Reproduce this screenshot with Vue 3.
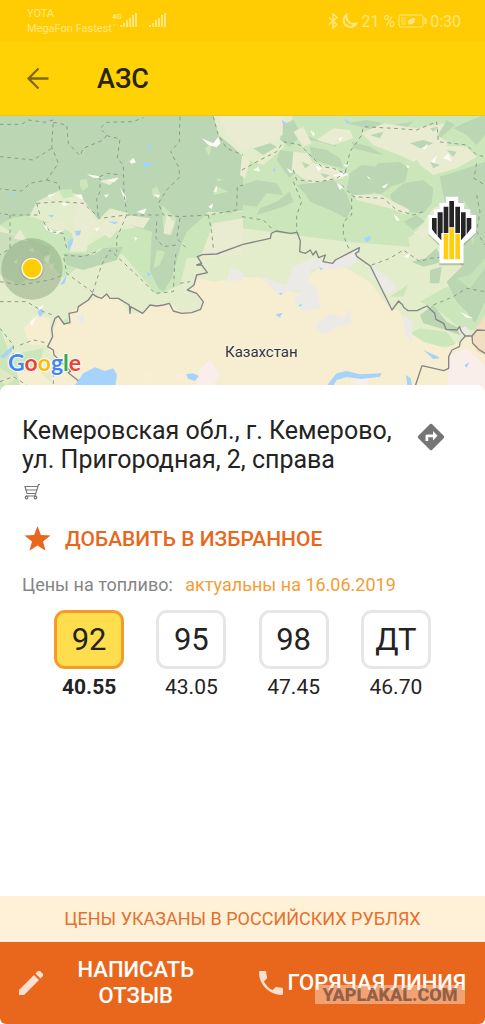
<script setup>
import { ref } from 'vue'

const fuels = [
  { name: '92', price: '40.55' },
  { name: '95', price: '43.05' },
  { name: '98', price: '47.45' },
  { name: 'ДТ', price: '46.70' },
]
const selected = ref('92')

const logo = [
  ['G', 'blue'],
  ['o', 'red'],
  ['o', 'yellow'],
  ['g', 'blue'],
  ['l', 'green'],
  ['e', 'red'],
]
</script>

<template>
  <div class="screen">
    <header class="top">
      <div class="status">
        <div class="carriers">YOTA<br />MegaFon Fastest</div>
        <svg class="signals" width="56" height="20" viewBox="0 0 56 20" fill="currentColor">
          <text x="0" y="8" font-size="8" font-weight="700" font-family="Roboto, sans-serif">4G</text>
          <path d="M8 14h2v2H8zM11 12h2v4h-2zM14 9h2v7h-2zM17 7h2v9h-2zM20 4h2v12h-2zM23 2h2v14h-2z" />
          <path d="M37 14h2v2h-2zM40 12h2v4h-2zM43 9h2v7h-2zM46 7h2v9h-2zM49 4h2v12h-2zM52 2h2v14h-2z" />
          <path d="M1 13h2v2H1zM4 13h2v2H4z" opacity=".4" />
        </svg>
        <div class="system">
          <svg width="12" height="16" viewBox="0 0 12 16" fill="none" stroke="currentColor" stroke-width="1.500">
            <path d="M2 4.500l8 7-4 3.500V1l4 3.500-8 7" />
          </svg>
          <svg width="16" height="16" viewBox="0 0 16 16" fill="none" stroke="currentColor" stroke-width="2">
            <path d="M4.500 1.500C1 4 .5 9 3.500 12c3.200 3.200 8.500 2.500 11-1.500C9 12.500 3.500 8 4.500 1.500Z" />
          </svg>
          <span>21 %</span>
          <svg width="29" height="14" viewBox="0 0 29 14" fill="none" stroke="currentColor">
            <rect x="1" y="1" width="24" height="12" rx="2" />
            <path d="M27.500 4v6" stroke-width="2" />
            <path d="M3 3h5v8H3z" fill="currentColor" stroke="none" opacity=".4" />
            <path d="M10 11c-1-5 2-7 7-7 0 5-2 7-6 6z" fill="currentColor" stroke="none" />
          </svg>
          <span>0:30</span>
        </div>
      </div>
      <div class="appbar">
        <button class="icon-button" aria-label="Назад">
          <svg width="24" height="24" viewBox="0 0 24 24" fill="none" stroke="currentColor" stroke-width="2.300">
            <path d="M22.500 11.500H3M12.500 1.500l-10 10 10 10" />
          </svg>
        </button>
        <h1>АЗС</h1>
      </div>
    </header>

    <section class="map" aria-label="Карта">
      <svg class="terrain" viewBox="0 3 1455 846" preserveAspectRatio="xMidYMin slice">
        <rect y="0" width="1455" height="860" fill="#e4edcb" />

        <!-- light woodland -->
        <g fill="#cbe6bb">
          <path d="M0 300 60 295 140 320 210 350 250 400 330 350 450 330 460 420 600 300 729 290 850 330 1000 360 1180 390 1240 360 1300 280 1455 220V0H880L850 100 790 150 729 130V420L560 430 540 510 470 540 370 420 300 400 230 460 190 490 120 410 0 330Z" />
          <path d="M726 340 1040 380 1230 395 1220 340 1080 230 900 220 726 200Z" />
          <path d="M1170 545 1225 508 1210 545ZM1260 560 1330 520 1400 500 1455 530V650L1380 640 1320 590Z" />
          <path d="M0 640 30 720 130 700 110 800 0 830ZM160 640 200 610 215 630 180 670ZM220 590 290 575 270 605Z" />
          <path d="M1200 670 1260 640 1340 650 1370 690 1290 700Z" />
        </g>

        <!-- dense forest -->
        <g fill="#bad6b3">
          <path d="M0 0H640L655 60 695 92 729 125V285L690 295 625 290 600 315 560 350 545 385 535 420 515 490 490 530 475 520 450 465 455 350 390 330 385 295 330 280 295 315 240 240 180 225 110 260 90 300 30 310 0 330Z" />
          <path d="M846 30 880 15 900 50 950 75 985 60 1010 95 960 80 895 70 870 95 840 75Z" />
          <path d="M840 105 880 110 895 160 870 190 850 165 830 135ZM726 210 770 195 830 205 850 240 800 235 770 275 726 270Z" />
          <path d="M930 95 980 105 1020 130 1030 160 970 145 935 130ZM1055 80 1110 95 1150 120 1120 115 1060 100Z" />
          <path d="M890 210 1000 195 1040 235 1055 280 1040 310 990 285 930 260 915 235Z" />
          <path d="M1050 175 1085 150 1130 155 1145 205 1120 235 1060 245 1040 220Z" />
          <path d="M1105 180 1135 145 1200 140 1225 160 1215 200 1170 215 1140 240 1110 225Z" />
          <path d="M1170 240 1210 205 1270 195 1300 220 1295 265 1270 295 1220 290 1180 270Z" />
          <path d="M1320 185 1400 160 1455 140V500L1400 470 1375 440 1350 330 1330 240Z" />
          <path d="M1360 40 1400 20 1455 0V60L1430 90 1400 60ZM1340 15 1365 30 1320 70 1335 85 1300 90Z" />
          <path d="M1340 500 1400 440 1455 410V560L1425 625 1400 590 1370 560Z" />
          <path d="M1260 600 1300 570 1340 620 1400 650 1380 660 1320 640 1270 625Z" />
          <path d="M1235 440 1275 430 1310 400 1330 440 1270 455ZM1290 465 1325 455 1318 505 1290 505Z" />
          <path d="M1040 25 1100 15 1180 30 1240 20 1220 38 1120 45ZM1180 55 1230 50 1290 65 1250 75ZM1210 320 1250 300 1275 320 1240 345ZM760 100 810 85 830 95 790 120ZM770 300 850 275 880 260 870 230 830 260 780 280Z" />
          <path d="M190 415 280 420 310 400 370 395 350 435 250 465 200 450Z" />
          <path d="M0 350 90 370 150 400 140 440 60 510 0 480Z" opacity=".6" />
        </g>
        <g fill="#cbe6bb">
          <path d="M240 195 260 192 265 215 248 228 240 212ZM455 225 470 213 483 240 460 248ZM175 225 215 222 220 245 190 250ZM615 100 635 85 628 125ZM485 270 530 310 515 360 490 340ZM650 190 668 193 655 200ZM645 212 685 230 640 240Z" />
          <path d="M1370 490 1410 480 1455 430V460L1410 520ZM1390 250 1430 320 1420 390 1390 330Z" opacity=".7" />
          <path d="M470 405 495 410 480 450 460 460Z" />
        </g>

        <!-- open plains -->
        <g fill="#e9ecd0">
          <path d="M655 0H850L848 60 790 90 729 105 680 60ZM880 50 910 35 935 85 910 95ZM880 110 920 115 940 145 1010 160 1030 190 930 205 875 165Z" />
          <path d="M1085 55 1150 25 1250 40 1335 25 1310 60 1350 85 1300 110 1240 140 1210 125 1120 90ZM1240 115 1310 90 1400 95 1430 125 1370 160 1300 180 1260 150Z" />
          <path d="M1060 240 1140 238 1190 265 1230 285 1220 300 1170 280 1070 255ZM950 75 1000 40 1050 45 1060 70 1000 90ZM726 120 750 140 735 190 720 180Z" />
          <path d="M240 240 300 335 340 285 380 300 450 310 430 340 370 325 330 370 290 345 240 380 220 330ZM130 325 195 320 190 350 150 340ZM310 195 355 188 330 210 300 200ZM200 250 250 245 240 270ZM500 300 525 320 510 360 490 355ZM1240 350 1300 335 1270 370Z" />
          <path d="M60 345 85 380 40 370ZM220 350 270 350 260 410 210 410ZM640 325 729 310 729 420 600 430Z" />
        </g>
        <g fill="#bad6b3">
          <path d="M1110 60 1150 50 1140 70ZM1230 85 1270 75 1300 85 1260 100ZM905 140 930 150 915 160ZM960 175 990 180 975 190ZM1290 140 1320 150 1300 160ZM1340 105 1370 110 1360 125ZM1290 40 1315 35 1300 50Z" />
        </g>

        <!-- steppe and desert -->
        <g fill="#f7edd0">
          <path d="M175 603 192 627 210 623 207 595 235 575 300 540 355 550 390 595 428 595 450 570 510 565 545 595 602 583 610 560 590 535 570 525 595 490 640 500 729 485 790 490 830 520 900 535 930 480 970 450 1040 460 1110 500 1160 570 1200 590 1225 650 1270 680 1340 700 1455 640V850H150L160 725 143 695Z" />
          <path d="M70 640 110 600 150 610 150 690 90 690ZM50 770 110 760 160 810 60 810Z" />
          <path d="M0 760 50 790 20 810 0 800Z" opacity=".5" />
        </g>
        <g fill="#ebeae6">
          <path d="M760 480 800 500 830 535 900 525 880 560 910 590 960 580 955 525 925 500 935 460 1000 465 1060 450 1080 410 1070 400 1000 440 940 430 880 455 860 510Z" />
          <path d="M950 625 990 595 1030 610 1050 580 1055 625 1010 635 975 660 950 645ZM1110 450 1165 490 1190 520 1160 540 1130 500ZM1210 600 1240 620 1235 680 1215 660ZM230 605 250 595 255 620 240 628ZM680 500 690 460 729 470 729 495ZM1370 640 1400 635 1410 655 1385 665Z" />
        </g>
        <g fill="#f9eeea">
          <path d="M600 760 630 735 660 780 640 810H590ZM1350 720 1400 700 1455 750V830H1340ZM1050 800 1110 780 1100 815ZM440 780 455 775 445 790ZM525 780 545 778 535 790Z" />
        </g>
        <path d="M1415 660 1455 600V720L1430 710Z" fill="#f2dfc2" />

        <!-- bare ridges -->
        <g fill="#fbfcf5">
          <path d="M605 70 640 85 655 65 662 85 650 97 625 90ZM388 140 400 128 408 142 395 146ZM260 178 290 182 310 190 280 188ZM320 198 355 187 345 200ZM312 240 328 238 318 248ZM360 218 378 245 375 260ZM143 240 170 235 150 245 155 255ZM225 240 245 238 248 255ZM183 262 208 268 190 273ZM410 290 440 280 432 298ZM640 230 652 210 650 230ZM625 275 640 265 635 282ZM460 238 480 240 475 250ZM285 340 300 338 290 350ZM403 365 412 370 405 378ZM130 330 165 350 190 345 170 358 140 345Z" />
          <path d="M760 165 775 155 780 170ZM930 45 945 55 940 65ZM945 150 965 160 955 170ZM1000 180 1035 170 1045 180 1015 190ZM1010 205 1030 215 1020 225ZM1030 150 1050 145 1040 155ZM1268 100 1285 85 1275 105ZM1292 140 1310 120 1305 145ZM1330 130 1345 115 1355 140 1345 135ZM1145 215 1165 205 1155 220ZM1100 180 1115 195 1105 190ZM1015 70 1030 65 1020 80ZM1180 295 1200 315 1190 318ZM860 160 880 170 870 175ZM1210 425 1230 415 1225 430ZM1380 590 1420 610 1400 608ZM90 620 110 605 95 635ZM110 580 130 570 125 585ZM130 435 150 420 145 445ZM1220 150 1230 155 1222 160Z" />
        </g>

        <!-- user area -->
        <circle cx="96" cy="462" r="92" fill="#7d9a72" opacity=".42" />
        <g fill="#c9d3be" opacity=".6">
          <path d="M130 425 150 418 142 440ZM85 408 98 398 104 410ZM148 452 165 442 155 465ZM40 440 55 432 50 448Z" />
        </g>

        <!-- water -->
        <g fill="#a5d3fb">
          <path d="M432 140 452 143 450 155 438 160 430 150ZM443 92 452 90 455 102 447 105ZM33 230 42 235 38 250ZM225 348 243 346 240 360 228 362ZM203 380 220 368 218 385 205 408ZM145 300 162 300 155 308ZM325 320 355 320 345 328ZM135 15 150 12 145 20Z" />
          <path d="M845 15 860 25 850 32ZM1030 12 1052 20 1040 25ZM818 160 828 162 822 172ZM1092 370 1108 362 1114 372 1098 382ZM957 455 970 462 962 465Z" />
          <path d="M180 510 200 480 195 505ZM112 590 125 580 130 595 120 607ZM0 725 40 690 35 710 10 730ZM440 472 455 475 445 485Z" />
          <path d="M225 810 250 775 285 757 315 768 340 760 351 780 345 820H220Z" />
          <path d="M558 778 580 775 597 783 585 798 565 792ZM828 598 848 593 840 605 845 610 830 602ZM835 535 850 533 842 541ZM895 570 908 567 900 576Z" />
          <path d="M980 812 1010 775 1040 768 1080 778 1145 775 1140 785 1085 792 1040 786 1010 795 1000 812ZM1270 705 1315 725 1318 730 1300 732ZM1218 780 1232 790 1236 812H1222ZM1393 750 1408 742 1400 758Z" />
        </g>

        <!-- regional boundaries -->
        <g fill="none" stroke="#8d9b8a" stroke-width="3" stroke-dasharray="11 11">
          <path d="M0 28 65 28 85 15 135 22 160 15 155 95 175 145 140 195 90 205 65 228 0 222M0 125 100 135 155 100M160 22 200 30 205 85 240 122 250 100 310 75 320 60 300 40 320 22 400 20 430 8M320 62 360 72 352 130 370 150 372 240 380 290M540 5 538 80 512 110 535 155 540 185 500 225 475 265 490 300 540 305 625 300 710 285 712 215 729 210M300 185 320 175 365 180M300 185 300 230 290 250 295 310" />
          <path d="M140 195 175 205 180 225M110 265 180 260 250 265 300 310 380 300 480 300M110 265 120 300 30 300 0 295M130 320 150 350 190 355 200 400M30 300 30 400 0 420M380 300 350 370 350 410M470 320 468 370 490 395 530 390M540 310 530 370 560 400M625 300 635 350 640 400M640 5 655 60 680 100 729 120" />
          <path d="M726 165 780 135 830 110 850 80 900 90 930 120 965 155 1000 160 1035 175 1050 110 1085 60 1090 35 1180 40 1250 45 1310 20 1315 80 1400 90 1430 120 1455 125M880 165 890 195 960 200 1010 190 1040 170M880 200 905 260 890 300 890 350M1025 210 1060 245 1150 250 1190 285 1240 300 1270 290M1055 250 1055 300 1030 320 1030 360 1048 405M1115 450 1170 430 1210 405 1260 440 1290 430M726 305 790 315 820 345M1430 145 1422 190 1455 210M1430 240 1440 290 1430 350 1455 390" />
          <path d="M278 532 200 475 190 420 250 425 290 410M278 532 305 450 330 405 410 480 465 535 520 530 525 430 530 405M0 560 80 560 130 590 165 602M0 500 60 510 150 495 190 480M60 690 100 675 145 685M0 640 40 690 40 720M0 800 40 785 80 810M160 730 160 810M540 505 570 500M1300 570 1360 545 1400 520 1455 530M1290 430 1400 420" />
        </g>

        <!-- national borders -->
        <g fill="none" stroke="#858585" stroke-width="4" stroke-linejoin="round">
          <path d="M235 797 205 773 212 768 162 720 160 705 143 695 158 665 155 640 165 610 175 603 192 627 210 623 207 595 232 590 235 575 265 555 278 537 290 545 305 550 320 537 330 550 355 550 388 570 390 595 392 575 428 595 450 570 470 573 490 570 508 565 520 588 545 595 575 593 602 583 610 560 590 535 562 525 582 510 590 480 622 473 605 450 590 450 605 445 592 425 608 419 650 417 729 388 811 370 814 355 828 348 871 355 891 352 901 378 899 410 916 415 931 405 939 420 948 408 956 428 976 420 969 440 998 445 1006 435 1078 398 1076 410 1066 415 1071 425 1111 453 1176 585 1196 558 1208 570 1211 577 1224 587 1251 587 1281 573 1304 595 1308 613 1331 625 1338 643 1371 645 1379 635 1384 650 1396 663 1416 663 1431 645 1455 646" />
          <path d="M1416 663 1418 685 1436 703 1455 715M1396 663 1381 680 1378 695 1356 705 1346 725 1346 760 1331 767 1266 752 1240 830" />
        </g>

        <!-- current position -->
        <circle cx="96" cy="462" r="35" fill="#6d7d5a" opacity=".25" />
        <circle cx="96" cy="460" r="32" fill="#fff9e0" />
        <circle cx="96" cy="460" r="28" fill="#ffcd05" />

        <!-- station marker -->
        <g transform="translate(726 0)">
          <path d="M559 302H575V285H592V266H611V246H649V266H667V285H685V302H702V353L665 388V447H592V388L559 356Z" fill="#657653" opacity=".35" transform="translate(0 4)" />
          <path d="M559 300H575V283H592V264H611V245H649V264H667V283H685V300H702V353L665 386V445H592V386L559 356Z" fill="#fff" />
          <path d="M570 309H584V361L570 343ZM587 292H602V354H598V376L587 364ZM605 275H619V354H605ZM622 258H636V337H622ZM640 275H654V354H640ZM657 292H671V360L657 376ZM674 309H688V340L674 358Z" fill="#252525" />
          <path d="M605 357H619V433H605ZM622 340H636V433H622ZM640 357H654V433H640Z" fill="#fdce12" />
        </g>
      </svg>
      <span class="country">Казахстан</span>
      <span class="google"><b v-for="(letter, i) in logo" :key="i" :class="letter[1]">{{ letter[0] }}</b></span>
    </section>

    <main class="card">
      <div class="address-row">
        <h2>Кемеровская обл., г. Кемерово, ул. Пригородная, 2, справа</h2>
        <button class="icon-button route" aria-label="Маршрут">
          <svg width="28" height="28" viewBox="0 0 28 28">
            <path d="M12.800 1.300 1.300 12.800q-1.200 1.200 0 2.400l11.500 11.500q1.200 1.200 2.400 0l11.500-11.500q1.200-1.200 0-2.400L15.200 1.300q-1.200-1.200-2.400 0Z" fill="#757575" />
            <path d="M8.500 18V13q0-1.500 1.500-1.500H16V8L20.500 12.700 16 17.400V14.200H11.200V18Z" fill="#fff" />
          </svg>
        </button>
      </div>
      <svg class="cart" width="20" height="18" viewBox="0 0 20 18" fill="none" stroke="#777" stroke-width="1.200">
        <path d="M18 1.500H16.500L13 13H4M16 3.500H3L5 10.500H14M4 7H15" />
        <circle cx="4.500" cy="14.500" r="1.300" />
        <circle cx="13.500" cy="14.500" r="1.300" />
      </svg>

      <button class="favorite">
        <svg width="28" height="28" viewBox="0 0 28 28" fill="currentColor">
          <path d="m13.500 1 3.400 9 9.600.4-7.500 6 2.600 9.300-8.100-5.300-8.100 5.300L8 16.400.5 10.400l9.600-.4Z" />
        </svg>
        <span>ДОБАВИТЬ В ИЗБРАННОЕ</span>
      </button>

      <p class="prices-title">Цены на топливо: <span>актуальны на 16.06.2019</span></p>

      <div class="fuels">
        <div v-for="fuel in fuels" :key="fuel.name" class="fuel" :class="{ active: fuel.name === selected }">
          <button :aria-pressed="fuel.name === selected" @click="selected = fuel.name">{{ fuel.name }}</button>
          <span>{{ fuel.price }}</span>
        </div>
      </div>
    </main>

    <p class="notice">ЦЕНЫ УКАЗАНЫ В РОССИЙСКИХ РУБЛЯХ</p>

    <footer class="actions">
      <button class="review">
        <svg width="26" height="26" viewBox="0 0 26 26" fill="currentColor">
          <path d="M1 20 16 5l5 5L6 25H1ZM17.500 3.500 19.700 1.300q1.300-1 2.600 0l2.400 2.400q1.300 1.300 0 2.600L22.500 8.500Z" />
        </svg>
        <span>НАПИСАТЬ ОТЗЫВ</span>
      </button>
      <button class="hotline">
        <svg width="26" height="26" viewBox="0 0 26 26" fill="currentColor">
          <path d="M2.300 1H7q1.300 0 1.300 1.300 0 2.500.8 4.700.3.900-.3 1.500L5.900 11.400q3.200 6 8.700 8.700l2.900-2.900q.6-.6 1.500-.3 2.200.7 4.700.8 1.300 0 1.300 1.300v4.700q0 1.300-1.300 1.300Q14.500 25 7.700 18.300 1 11.500 1 2.300 1 1 2.300 1Z" />
        </svg>
        <span>ГОРЯЧАЯ ЛИНИЯ</span>
      </button>
      <span class="watermark">YAPLAKAL.COM</span>
    </footer>
  </div>
</template>

<style>
body {
  margin: 0;
  background: #fff;
}
</style>

<style scoped>
* {
  box-sizing: border-box;
}
.screen {
  display: flex;
  flex-direction: column;
  min-height: 100vh;
  background: #fff;
  color: #232323;
  font-family: Roboto, "Liberation Sans", sans-serif;
}
button {
  padding: 0;
  border: 0;
  background: none;
  color: inherit;
  font: inherit;
  cursor: pointer;
}
svg {
  display: block;
  flex: none;
}
h1, h2, p {
  margin: 0;
}
.top {
  background: #ffd205;
}
.status {
  display: flex;
  align-items: flex-start;
  height: 42px;
  padding: 6px 24px 0 27px;
  background: #ffcc03;
  color: #ffe780;
}
.carriers {
  font-size: 11px;
  line-height: 15px;
}
.signals {
  margin-top: 5px;
}
.system {
  display: flex;
  align-items: center;
  gap: 3px;
  height: 30px;
  margin-left: auto;
  font-size: 16px;
}
.appbar {
  display: flex;
  align-items: center;
  gap: 47px;
  height: 74px;
  padding: 0 26px;
  border-bottom: 1px solid #e9c727;
}
.appbar .icon-button {
  color: #80690a;
}
h1 {
  color: #2a2407;
  font-size: 27px;
  font-weight: 500;
}
.map {
  position: relative;
  height: 282px;
  overflow: hidden;
}
.terrain {
  width: 100%;
  height: 100%;
}
.country {
  position: absolute;
  top: 227px;
  left: 225px;
  color: #333;
  font-size: 15px;
  line-height: 18px;
  text-shadow: 0 0 2px #fff, 0 0 2px #fff;
}
.google {
  position: absolute;
  top: 230px;
  left: 8px;
  font-family: Lato, sans-serif;
  font-size: 23px;
  line-height: 32px;
  text-shadow: 1px 0 1px #fff, -1px 0 1px #fff, 0 1px 1px #fff, 0 -1px 1px #fff;
}
.google b {
  font-weight: 700;
}
.blue { color: #4285f4; }
.red { color: #ea4335; }
.yellow { color: #fbbc05; }
.green { color: #34a853; }
.card {
  position: relative;
  flex: 1;
  margin-top: -13px;
  padding: 31px 22px 24px;
  border-radius: 8px 8px 0 0;
  background: #fff;
}
.address-row {
  display: flex;
  justify-content: space-between;
  align-items: flex-start;
  padding-right: 18px;
}
h2 {
  width: 380px;
  font-size: 25px;
  font-weight: 400;
  line-height: 29px;
}
.route {
  margin-top: 7px;
}
.cart {
  margin-top: 9px;
}
.favorite {
  display: flex;
  align-items: center;
  gap: 13px;
  margin-top: 24px;
  padding-left: 2px;
  color: #e8671c;
  font-size: 21px;
  font-weight: 500;
  line-height: 28px;
}
.prices-title {
  margin-top: 20px;
  color: #858585;
  font-size: 18px;
  line-height: 24px;
}
.prices-title span {
  margin-left: 8px;
  color: #f59d33;
}
.fuels {
  display: grid;
  grid-template-columns: repeat(4, 1fr);
  margin: 13px 16px 0;
}
.fuel {
  display: flex;
  flex-direction: column;
  align-items: center;
  gap: 6px;
  font-size: 21px;
  line-height: 24px;
}
.fuel button {
  width: 70px;
  height: 59px;
  border: 3px solid #e6e6e6;
  border-radius: 11px;
  font-size: 31px;
}
.fuel.active {
  font-weight: 700;
}
.fuel.active button {
  border-color: #f59b2b;
  background: #ffde4d;
  font-weight: 400;
}
.notice {
  padding: 11px 16px;
  background: #fff1d8;
  color: #e5702d;
  font-size: 18px;
  line-height: 24px;
  text-align: center;
}
.actions {
  position: relative;
  display: flex;
  height: 82px;
  border-radius: 0 0 6px 6px;
  background: #e8671c;
  color: #fff;
  font-size: 22px;
  font-weight: 500;
  line-height: 26px;
}
.actions button {
  display: flex;
  flex: 1;
  align-items: center;
  padding: 0 18px;
}
.actions svg {
  color: #fce0cf;
}
.actions .review {
  padding-right: 12px;
}
.review span {
  flex: 1;
  padding: 0 30px;
}
.actions .hotline {
  gap: 4px;
  white-space: nowrap;
}
.watermark {
  position: absolute;
  right: 20px;
  bottom: 20px;
  width: 150px;
  background: rgba(255, 220, 200, 0.5);
  color: rgba(90, 60, 45, 0.65);
  font-size: 18px;
  font-weight: 900;
  line-height: 19px;
  text-align: center;
  pointer-events: none;
}
</style>
